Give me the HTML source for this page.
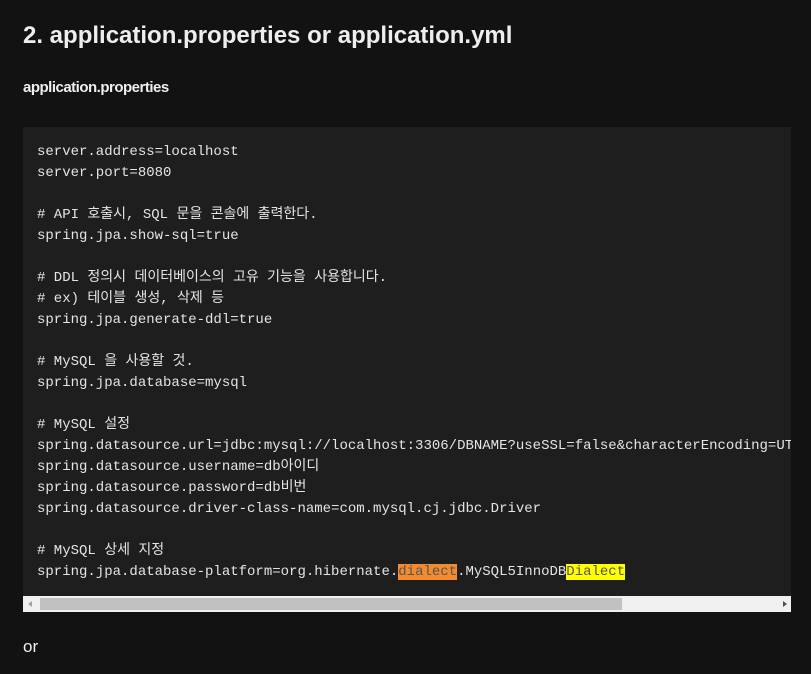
<!DOCTYPE html>
<html><head><meta charset="utf-8"><style>
body{margin:0;background:#121212;width:811px;height:674px;overflow:hidden;font-family:"Liberation Sans","Noto Sans CJK KR",sans-serif;color:#eee}
h2{position:absolute;left:23px;top:18px;margin:0;font-size:24px;font-weight:bold;line-height:36px}
h4{position:absolute;left:23px;top:79px;margin:0;font-size:15px;font-weight:bold;letter-spacing:-0.5px}
.code{position:absolute;left:23px;top:127px;width:768px;height:485px;background:#1e1e1e;overflow:hidden}
pre{margin:0;position:absolute;left:14px;top:15px;font-family:"Liberation Mono","Noto Sans CJK KR",monospace;font-size:14px;line-height:21px;color:#e4e4e4;white-space:pre}
.o{background:#f28b30;color:#555}.y{background:#ffff00;color:#555}
.sb{position:absolute;left:0;bottom:0;width:768px;height:16px;background:#f0f0f0}
.th{position:absolute;left:17px;top:2px;width:582px;height:12px;background:#c1c1c1}
.or{position:absolute;left:23px;top:637px;font-size:17px}
</style></head><body>
<h2>2. application.properties or application.yml</h2>
<h4>application.properties</h4>
<div class="code"><pre>server.address=localhost
server.port=8080

# API 호출시, SQL 문을 콘솔에 출력한다.
spring.jpa.show-sql=true

# DDL 정의시 데이터베이스의 고유 기능을 사용합니다.
# ex) 테이블 생성, 삭제 등
spring.jpa.generate-ddl=true

# MySQL 을 사용할 것.
spring.jpa.database=mysql

# MySQL 설정
spring.datasource.url=jdbc:mysql://localhost:3306/DBNAME?useSSL=false&amp;characterEncoding=UTF-8
spring.datasource.username=db아이디
spring.datasource.password=db비번
spring.datasource.driver-class-name=com.mysql.cj.jdbc.Driver

# MySQL 상세 지정
spring.jpa.database-platform=org.hibernate.<span class="o">dialect</span>.MySQL5InnoDB<span class="y">Dialect</span></pre>
<div class="sb"><div class="th"></div>
<div style="position:absolute;left:5px;top:5px;border:3px solid transparent;border-right:4px solid #a3a3a3;border-left:0"></div>
<div style="position:absolute;right:4px;top:5px;border:3px solid transparent;border-left:4px solid #505050;border-right:0"></div></div>
</div>
<div class="or">or</div>
</body></html>
